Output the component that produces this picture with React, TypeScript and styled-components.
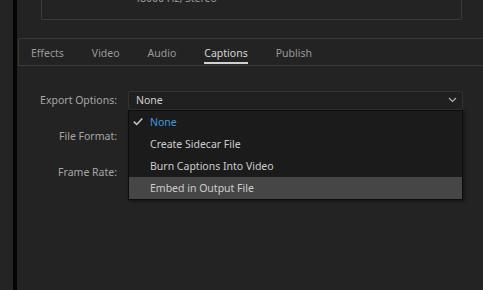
import React from 'react';
import styled, { createGlobalStyle } from 'styled-components';

const GlobalStyle = createGlobalStyle`
  html, body {
    margin: 0;
    padding: 0;
    background: #232323;
  }
  body {
    font-family: 'Noto Sans', 'Open Sans', sans-serif;
    font-size: 10.5px;
    color: #a9a9a9;
  }
`;

const TABS = ['Effects', 'Video', 'Audio', 'Captions', 'Publish'];
const OPTIONS = ['None', 'Create Sidecar File', 'Burn Captions Into Video', 'Embed in Output File'];

function Chevron() {
  return (
    <svg width='9' height='6' viewBox='0 0 9 6'>
      <path d='M1 1 L4.5 4.5 L8 1' fill='none' stroke='#b0b0b0' strokeWidth='1.2' />
    </svg>
  );
}

function Check() {
  return (
    <svg width='10' height='9' viewBox='0 0 10 9'>
      <path d='M0.8 4.6 L3.7 7.5 L9.3 1.4' fill='none' stroke='#c8c8c8' strokeWidth='1.5' />
    </svg>
  );
}

export default function App() {
  const selected = 0;
  const hovered = 3;

  return (
    <Page>
      <GlobalStyle />
      <Gutter />
      <Divider />
      <Panel>
        <SummaryBox>
          <SummaryLine>Audio: AAC, 320 kbps</SummaryLine>
          <SummaryLine>48000 Hz, Stereo</SummaryLine>
        </SummaryBox>

        <TabBar>
          {TABS.map((tab) => (
            <Tab key={tab} active={tab === 'Captions'}>
              {tab}
            </Tab>
          ))}
        </TabBar>

        <Form>
          <Row>
            <Label>Export Options:</Label>
            <FieldWrap>
              <Select>
                <span>None</span>
                <Chevron />
              </Select>
              <Menu>
                {OPTIONS.map((opt, i) => (
                  <MenuItem key={opt} selected={i === selected} hovered={i === hovered}>
                    <CheckSlot>{i === selected && <Check />}</CheckSlot>
                    {opt}
                  </MenuItem>
                ))}
              </Menu>
            </FieldWrap>
          </Row>
          <Row>
            <Label>File Format:</Label>
            <FieldWrap>
              <Select />
            </FieldWrap>
          </Row>
          <Row>
            <Label>Frame Rate:</Label>
            <FieldWrap>
              <Select />
            </FieldWrap>
          </Row>
        </Form>
      </Panel>
    </Page>
  );
}

const Page = styled.div`
  display: flex;
  width: 483px;
  height: 290px;
  overflow: hidden;
  background: #232323;
`;

const Gutter = styled.div`
  width: 13px;
  flex-shrink: 0;
  background: #242424;
`;

const Divider = styled.div`
  width: 4px;
  flex-shrink: 0;
  background: #050505;
`;

const Panel = styled.div`
  flex: 1;
  display: flex;
  flex-direction: column;
  padding-left: 1px;
`;

const SummaryBox = styled.div`
  margin: -40px 21px 0 23px;
  height: 60px;
  box-sizing: border-box;
  border: 1px solid #3a3a3a;
  border-top: none;
  border-radius: 0 0 2px 2px;
  padding: 14px 0 0 92px;
`;

const SummaryLine = styled.div`
  color: #9c9c9c;
  line-height: 16px;
`;

const TabBar = styled.div`
  margin-top: 18px;
  height: 26px;
  display: flex;
  align-items: stretch;
  gap: 28px;
  padding-left: 12px;
  border-top: 1px solid #393939;
  border-bottom: 1px solid #393939;
  border-left: 1px solid #393939;
  border-radius: 3px 0 0 0;
`;

const Tab = styled.div<{ active?: boolean }>`
  position: relative;
  display: flex;
  align-items: center;
  padding-top: 2px;
  color: ${({ active }) => (active ? '#d6d6d6' : '#9a9a9a')};
  &::after {
    content: '';
    display: ${({ active }) => (active ? 'block' : 'none')};
    position: absolute;
    left: 0;
    right: 0;
    bottom: 1px;
    height: 2px;
    background: #d0d0d0;
  }
`;

const Form = styled.div`
  display: flex;
  flex-direction: column;
  gap: 18px;
  padding-top: 25px;
`;

const Row = styled.div`
  display: flex;
  align-items: center;
  height: 18px;
`;

const Label = styled.div`
  width: 99px;
  flex-shrink: 0;
  text-align: right;
  color: #a6a6a6;
`;

const FieldWrap = styled.div`
  position: relative;
  margin-left: 11px;
  width: 335px;
`;

const Select = styled.div`
  height: 19px;
  box-sizing: border-box;
  display: flex;
  align-items: center;
  justify-content: space-between;
  padding: 0 5px 0 7px;
  background: #202020;
  border: 1px solid #333333;
  border-radius: 2px;
  color: #cfcfcf;
`;

const Menu = styled.div`
  position: absolute;
  z-index: 2;
  top: 19px;
  left: 0;
  width: 335px;
  box-sizing: border-box;
  background: #1b1b1b;
  border: 1px solid #0d0d0d;
  box-shadow: 1px 1px 3px rgba(0, 0, 0, 0.5);
`;

const MenuItem = styled.div<{ selected?: boolean; hovered?: boolean }>`
  display: flex;
  align-items: center;
  height: 22px;
  color: ${({ selected }) => (selected ? '#3f97de' : '#cdcdcd')};
  background: ${({ hovered }) => (hovered ? '#464646' : 'transparent')};
`;

const CheckSlot = styled.span`
  width: 21px;
  box-sizing: border-box;
  display: flex;
  padding-left: 4px;
`;
